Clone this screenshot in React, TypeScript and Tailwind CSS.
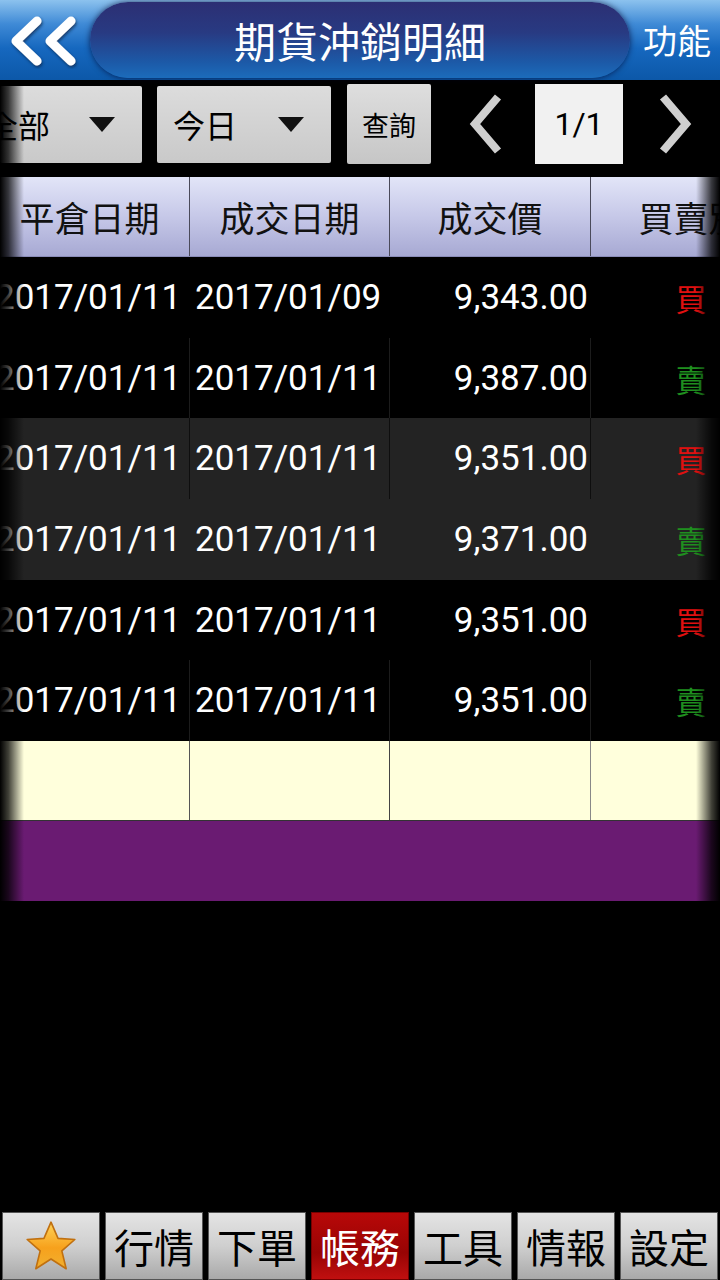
import React from "react";

const CJK = { fontFamily: '"Noto Sans CJK TC", "Noto Sans", sans-serif' };
const NUM = { fontFamily: 'Roboto, "Noto Sans CJK TC", sans-serif' };

type Row = { close: string; trade: string; price: string; side: "買" | "賣"; bg: string; line: string };

const rows: Row[] = [
  { close: "2017/01/11", trade: "2017/01/09", price: "9,343.00", side: "買", bg: "bg-black", line: "border-black" },
  { close: "2017/01/11", trade: "2017/01/11", price: "9,387.00", side: "賣", bg: "bg-black", line: "border-[#1c1c1c]" },
  { close: "2017/01/11", trade: "2017/01/11", price: "9,351.00", side: "買", bg: "bg-[#232323]", line: "border-[#0e0e0e]" },
  { close: "2017/01/11", trade: "2017/01/11", price: "9,371.00", side: "賣", bg: "bg-[#232323]", line: "border-[#232323]" },
  { close: "2017/01/11", trade: "2017/01/11", price: "9,351.00", side: "買", bg: "bg-black", line: "border-black" },
  { close: "2017/01/11", trade: "2017/01/11", price: "9,351.00", side: "賣", bg: "bg-black", line: "border-[#1c1c1c]" },
];

function BackIcon() {
  return (
    <svg width="90" height="80" viewBox="0 0 90 80">
      <defs>
        <filter id="sh" x="-20%" y="-20%" width="140%" height="140%">
          <feDropShadow dx="1" dy="2" stdDeviation="1.5" floodColor="#0a2a55" floodOpacity="0.8" />
        </filter>
      </defs>
      <g filter="url(#sh)" fill="none" stroke="#ffffff" strokeWidth="9" strokeLinecap="round" strokeLinejoin="round">
        <polyline points="37,21 16,41 37,61" />
        <polyline points="71,21 50,41 71,61" />
      </g>
    </svg>
  );
}

function Chevron({ dir }: { dir: "l" | "r" }) {
  return (
    <svg width="34" height="60" viewBox="0 0 34 60">
      <polyline
        points={dir === "l" ? "29,3 6,30 29,57" : "5,3 28,30 5,57"}
        fill="none"
        stroke="#cfcfcf"
        strokeWidth="8"
        strokeLinejoin="miter"
      />
    </svg>
  );
}

function Tri() {
  return (
    <svg width="26" height="15" viewBox="0 0 26 15">
      <polygon points="0,0 26,0 13,15" fill="#111" />
    </svg>
  );
}

function Star() {
  return (
    <svg width="56" height="52" viewBox="0 0 50 48">
      <defs>
        <linearGradient id="sg" x1="0" y1="0" x2="0" y2="1">
          <stop offset="0" stopColor="#ffd45a" />
          <stop offset="0.55" stopColor="#f7a11c" />
          <stop offset="1" stopColor="#f0b030" />
        </linearGradient>
      </defs>
      <polygon
        points="25,2 31.5,17 47,18 35,28.5 39,45 25,36 11,45 15,28.5 3,18 18.5,17"
        fill="url(#sg)"
        stroke="#c07010"
        strokeWidth="1.5"
        strokeLinejoin="round"
      />
    </svg>
  );
}

export default function App() {
  return (
    <div className="w-[720px] h-[1280px] bg-black overflow-hidden flex flex-col" style={CJK}>
      {/* Title bar */}
      <div className="h-[80px] flex items-stretch bg-[linear-gradient(to_bottom,#8cc2ee_0%,#3f8ad6_30%,#1668bf_60%,#0c58a8_100%)]">
        <div className="w-[90px] flex items-center justify-center">
          <BackIcon />
        </div>
        <div className="w-[540px] my-[2px] rounded-[38px] bg-[linear-gradient(to_bottom,#2c2f73_0%,#283a82_40%,#1c5aa8_80%,#1c6cbb_100%)] shadow-[0_0_6px_rgba(0,0,40,0.7)] flex items-center justify-center">
          <span className="text-white text-[42px] leading-none">期貨沖銷明細</span>
        </div>
        <div className="flex-1 flex items-center justify-center pl-[4px]">
          <span className="text-white text-[34px] leading-none">功能</span>
        </div>
      </div>

      <div className="relative mt-[4px]">
        {/* Controls row */}
        <div className="h-[80px] flex items-center">
          <div className="w-[142px] h-[77px] rounded-[2px] bg-[linear-gradient(to_bottom,#dcdcdc,#c9c9c9)] flex items-center justify-between pr-[27px] overflow-hidden">
            <span className="text-[32px] leading-none text-black ml-[-14px]">全部</span>
            <Tri />
          </div>
          <div className="w-[174px] h-[77px] ml-[15px] rounded-[2px] bg-[linear-gradient(to_bottom,#dcdcdc,#c9c9c9)] flex items-center justify-between pl-[16px] pr-[27px]">
            <span className="text-[32px] leading-none text-black">今日</span>
            <Tri />
          </div>
          <div className="w-[84px] h-[80px] ml-[16px] rounded-[2px] bg-[linear-gradient(to_bottom,#dedede,#c6c6c6)] flex items-center justify-center">
            <span className="text-[27px] leading-none text-black">查詢</span>
          </div>
          <div className="ml-[38px] flex items-center">
            <Chevron dir="l" />
          </div>
          <div className="w-[88px] h-[80px] ml-[32px] bg-[#f1f1f1] flex items-center justify-center">
            <span className="text-[32px] leading-none text-black" style={NUM}>1/1</span>
          </div>
          <div className="ml-[35px] flex items-center">
            <Chevron dir="r" />
          </div>
        </div>

        {/* Table */}
        <div className="mt-[13px] overflow-hidden">
          <div className="ml-[-10px] w-[801px]">
            <div className="h-[80px] grid grid-cols-[200px_200px_201px_200px] bg-[linear-gradient(to_bottom,#e2e5f8,#c6c8e8_50%,#a7a9d3)] border-b border-[#8a8cb8]">
              {["平倉日期", "成交日期", "成交價", "買賣別"].map((h, i) => (
                <div
                  key={h}
                  className={`flex items-center justify-center text-[35px] leading-none text-[#111] whitespace-nowrap ${i < 3 ? "border-r border-[#4a4a5a]" : ""}`}
                >
                  {h}
                </div>
              ))}
            </div>
            {rows.map((r, idx) => (
              <div key={idx} className={`h-[80.7px] grid grid-cols-[200px_200px_201px_200px] ${r.bg}`}>
                <div className={`flex items-center pl-[5px] border-r ${r.line}`}>
                  <span className="text-white text-[35px] leading-none" style={NUM}>{r.close}</span>
                </div>
                <div className={`flex items-center pl-[5px] border-r ${r.line}`}>
                  <span className="text-white text-[35px] leading-none" style={NUM}>{r.trade}</span>
                </div>
                <div className={`flex items-center justify-end pr-[2px] border-r ${r.line}`}>
                  <span className="text-white text-[35px] leading-none" style={NUM}>{r.price}</span>
                </div>
                <div className="flex items-center justify-center">
                  <span
                    className={`text-[31px] leading-none ${r.side === "買" ? "text-[#e01010]" : "text-[#1f8f1f]"}`}
                  >
                    {r.side}
                  </span>
                </div>
              </div>
            ))}
            <div className="h-[80px] grid grid-cols-[200px_200px_201px_200px] bg-[#ffffdc] border-b border-[#333]">
              <div className="border-r border-[#555]" />
              <div className="border-r border-[#444]" />
              <div className="border-r border-[#888]" />
              <div />
            </div>
            <div className="h-[80px] bg-[#6a1b72]" />
          </div>
        </div>

        {/* edge vignette */}
        <div className="pointer-events-none absolute left-0 top-0 bottom-0 w-[24px] bg-[linear-gradient(to_right,#000_0%,rgba(0,0,0,0.75)_35%,rgba(0,0,0,0)_100%)]" />
        <div className="pointer-events-none absolute right-0 top-[93px] bottom-0 w-[24px] bg-[linear-gradient(to_left,#000_0%,rgba(0,0,0,0.75)_35%,rgba(0,0,0,0)_100%)]" />
      </div>

      <div className="flex-1" />

      {/* Bottom nav */}
      <div className="h-[68px] flex gap-[5px] px-[2px]">
        {[
          { k: "star" },
          { k: "行情" },
          { k: "下單" },
          { k: "帳務", active: true },
          { k: "工具" },
          { k: "情報" },
          { k: "設定" },
        ].map((b) => (
          <div
            key={b.k}
            className={`w-[98px] h-[68px] flex items-center justify-center border ${
              b.active
                ? "border-[#700] bg-[linear-gradient(to_bottom,#b80808,#980404_60%,#c01010)]"
                : "border-[#555] bg-[linear-gradient(to_bottom,#e4e4e4,#cfcfcf_50%,#a9a9a9)]"
            }`}
          >
            {b.k === "star" ? (
              <Star />
            ) : (
              <span className={`text-[40px] leading-none whitespace-nowrap ${b.active ? "text-white" : "text-black"}`}>{b.k}</span>
            )}
          </div>
        ))}
      </div>
    </div>
  );
}
